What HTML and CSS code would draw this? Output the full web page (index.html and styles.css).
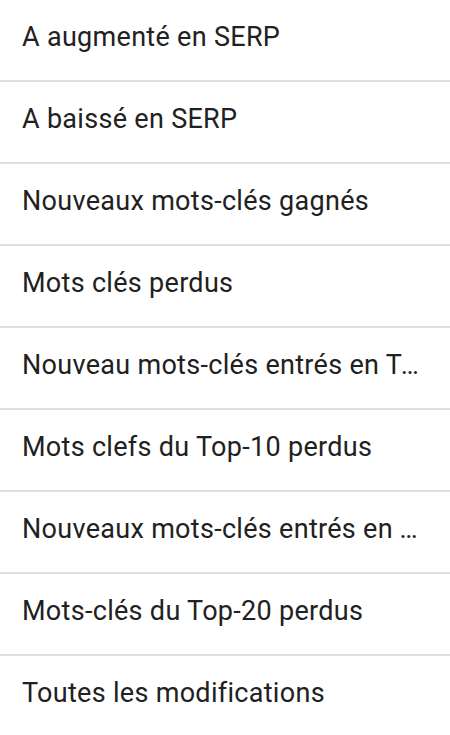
FILE: index.html
```html
<!DOCTYPE html>
<html lang="fr">
<head>
<meta charset="utf-8">
<link rel="stylesheet" href="styles.css">
</head>
<body>
<ul class="menu">
  <li class="item">A augmenté en SERP</li>
  <li class="item">A baissé en SERP</li>
  <li class="item">Nouveaux mots-clés gagnés</li>
  <li class="item">Mots clés perdus</li>
  <li class="item">Nouveau mots-clés entrés en Top-10</li>
  <li class="item">Mots clefs du Top-10 perdus</li>
  <li class="item">Nouveaux mots-clés entrés en Top-20</li>
  <li class="item">Mots-clés du Top-20 perdus</li>
  <li class="item">Toutes les modifications</li>
</ul>
</body>
</html>
```
FILE: styles.css
```css
html, body {
  margin: 0;
  padding: 0;
  background: #ffffff;
}
.menu {
  list-style: none;
  margin: 0;
  padding: 0;
  width: 450px;
}
.item {
  box-sizing: border-box;
  height: 82px;
  padding: 0 22px 0 22px;
  border-bottom: 2px solid #e0e0e0;
  font-family: Roboto, "Noto Sans", sans-serif;
  font-size: 27px;
  font-weight: 400;
  letter-spacing: 0.3px;
  line-height: 75px;
  color: #212121;
  white-space: nowrap;
  overflow: hidden;
  text-overflow: ellipsis;
}
.item:last-child {
  border-bottom: none;
}
```
